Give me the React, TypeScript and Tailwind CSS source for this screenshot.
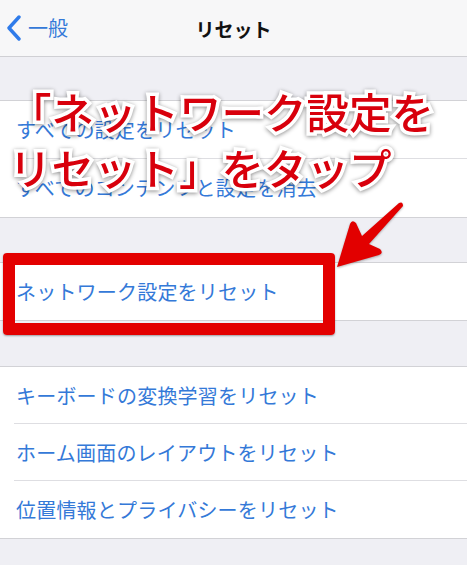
import React from "react";

const font = {
  fontFamily: '"Noto Sans CJK JP", "Noto Sans", sans-serif',
};

function Row({ text, last, h }: { text: string; last?: boolean; h: string }) {
  return (
    <div className={`relative ${h} flex items-center pl-[16px] bg-white`}>
      <span className="text-[20px] text-[#3479d8] leading-none tracking-[0.2px]">{text}</span>
      {!last && <div className="absolute left-[14px] right-0 bottom-0 h-px bg-[#dedee2]" />}
    </div>
  );
}

function Group({ items, h }: { items: string[]; h: string }) {
  return (
    <div className="border-y border-[#d2d2d6] bg-white">
      {items.map((t, i) => (
        <Row key={t} text={t} h={h} last={i === items.length - 1} />
      ))}
    </div>
  );
}

export default function App() {
  return (
    <div className="relative w-[467px] h-[565px] overflow-hidden bg-[#efeff4]" style={font}>
      <div className="h-[57px] bg-[#f7f7f8] border-b border-[#d0d0d4] flex items-center relative">
        <div className="flex items-center pl-[6px]">
          <svg width="16" height="26" viewBox="0 0 16 26" className="mr-[6px]">
            <path d="M13 2 L3 13 L13 24" fill="none" stroke="#2f7bea" strokeWidth="3.4" strokeLinecap="round" strokeLinejoin="round" />
          </svg>
          <span className="text-[20px] text-[#3479d8] leading-none">一般</span>
        </div>
        <div className="absolute inset-0 flex items-center justify-center">
          <span className="text-[19px] font-bold text-[#111] leading-none">リセット</span>
        </div>
      </div>

      <div className="h-[43px]" />
      <Group h="h-[58px]" items={["すべての設定をリセット", "すべてのコンテンツと設定を消去"]} />
      <div className="h-[44px]" />
      <Group h="h-[57px]" items={["ネットワーク設定をリセット"]} />
      <div className="h-[45px]" />
      <Group h="h-[57px]" items={["キーボードの変換学習をリセット", "ホーム画面のレイアウトをリセット", "位置情報とプライバシーをリセット"]} />

      {/* red highlight box */}
      <div className="absolute left-[3px] top-[253px] w-[332px] h-[82px] border-[12px] border-[#e30000] rounded-[4px] shadow-[0_1px_2px_rgba(0,0,0,0.35)]" />

      {/* arrow */}
      <svg className="absolute left-0 top-0" width="467" height="565" style={{ filter: "drop-shadow(0 1px 1px rgba(0,0,0,0.3))" }}>
        <path
          d="M337 267 L350 224 Q352 219 356 223 L362 236 L399 203 Q403 201 403 206 L369 244 L380 249 Q384 253 379 255 Z"
          fill="#e20000"
        />
      </svg>

      {/* annotation text */}
      <div
        className="absolute left-[9px] top-[83px] text-[42.5px] leading-[56px] font-medium text-[#d8000c] whitespace-nowrap [paint-order:stroke_fill] [-webkit-text-stroke:7px_white] [filter:drop-shadow(0_1px_2px_rgba(0,0,0,0.45))]"
      >
        <div>「ネットワーク設定を</div>
        <div>リセット」をタップ</div>
      </div>
    </div>
  );
}
